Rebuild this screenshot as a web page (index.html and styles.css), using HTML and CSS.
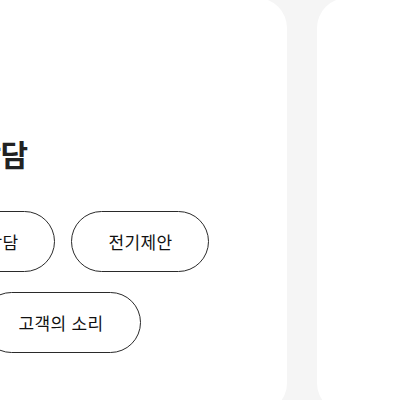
FILE: index.html
```html
<!DOCTYPE html>
<html lang="ko">
<head>
<meta charset="utf-8">
<link rel="stylesheet" href="styles.css">
</head>
<body>
<div class="track">
  <section class="card card-main">
    <h2 class="title">자주 찾는 전기상담</h2>
    <div class="row">
      <a class="pill">요금</a>
      <a class="pill">전화상담</a>
      <a class="pill">전기제안</a>
    </div>
    <div class="row">
      <a class="pill">전기사용신청</a>
      <a class="pill">고객의 소리</a>
    </div>
  </section>
  <section class="card card-next"></section>
</div>
</body>
</html>
```

FILE: styles.css
```css
html, body {
  margin: 0;
  padding: 0;
  height: 100%;
  overflow: hidden;
  background: #f5f5f5;
  font-family: "Noto Sans CJK KR", "Noto Sans", sans-serif;
  color: #222;
}

.track {
  display: flex;
  gap: 30px;
  margin-top: -2px;
  margin-left: -244.5px;
}

.card {
  flex: none;
  height: 415px;
  background: #fff;
  border-radius: 30px;
  box-sizing: border-box;
}

.card-main {
  width: 531.5px;
  padding: 133px 0 0 40px;
}

.card-next {
  width: 500px;
}

.title {
  margin: 0 0 35px;
  font-size: 30px;
  font-weight: 700;
  line-height: 45px;
  white-space: nowrap;
  letter-spacing: -0.55px;
}

.row {
  display: flex;
  gap: 16px;
  margin-bottom: 20px;
}

.pill {
  flex: none;
  display: flex;
  align-items: center;
  justify-content: center;
  height: 61px;
  padding: 0 36px;
  box-sizing: border-box;
  border: 1px solid #2a2a2a;
  border-radius: 31px;
  font-size: 17px;
  font-weight: 400;
  letter-spacing: 0.35px;
  color: #111;
  white-space: nowrap;
}
```
